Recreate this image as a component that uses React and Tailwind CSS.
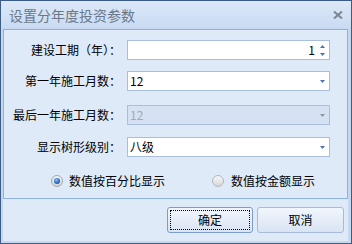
export default function App() {
  const DownArrow = ({ color = "#4a74ad" }) => (
    <svg width="5" height="3" viewBox="0 0 5 3" className="block">
      <path d="M0 0H5L2.5 3Z" fill={color} />
    </svg>
  );
  const UpArrow = ({ color = "#4a74ad" }) => (
    <svg width="5" height="3" viewBox="0 0 5 3" className="block">
      <path d="M0 3H5L2.5 0Z" fill={color} />
    </svg>
  );
  const Label = ({ children }) => (
    <div className="w-[117px] text-right text-[12px] leading-none text-black">{children}</div>
  );
  return (
    <div className="w-[352px] h-[244px] border border-[#3b5b89] flex flex-col [font-family:'Noto_Sans_CJK_SC',sans-serif] bg-[#c5d8f0]">
      <div className="h-[27px] flex items-center justify-between pl-[8px] pr-[8px] bg-gradient-to-b from-[#dce8f8] to-[#c9dbf2]">
        <span className="text-[14px] leading-none text-[#6a7889]">设置分年度投资参数</span>
        <svg width="10" height="8" viewBox="0 0 10 8" className="block">
          <path d="M1 0.5L9 7.5M9 0.5L1 7.5" stroke="#7c8692" strokeWidth="2" />
        </svg>
      </div>
      <div className="flex-1 pl-[2px] pr-[3px] pt-[1px] pb-[2px] flex">
        <div className="flex-1 bg-[#dfeaf9] flex flex-col">
          <div className="h-[170px] border border-[#8db1e0] flex flex-col">
            <div className="mt-[10px] flex items-center h-[20px]">
              <Label>建设工期（年）：</Label>
              <div className="ml-[6px] w-[203px] h-[20px] border border-[#a8bedb] bg-white flex items-center justify-end pr-[4px]">
                <span className="text-[12px] leading-none text-black">1</span>
                <div className="ml-[5px] flex flex-col gap-[5px]">
                  <UpArrow />
                  <DownArrow />
                </div>
              </div>
            </div>
            <div className="mt-[11px] flex items-center h-[20px]">
              <Label>第一年施工月数：</Label>
              <div className="ml-[6px] w-[203px] h-[20px] border border-[#a8bedb] bg-white flex items-center justify-between pl-[2px] pr-[4px]">
                <span className="text-[12px] leading-none text-black">12</span>
                <DownArrow />
              </div>
            </div>
            <div className="mt-[14px] flex items-center h-[20px]">
              <Label>最后一年施工月数：</Label>
              <div className="ml-[6px] w-[203px] h-[20px] border border-[#a8bedb] bg-[#d6e2f3] flex items-center justify-between pl-[2px] pr-[4px]">
                <span className="text-[12px] leading-none text-[#a3a9b1]">12</span>
                <DownArrow color="#8e959d" />
              </div>
            </div>
            <div className="mt-[12px] flex items-center h-[20px]">
              <Label>显示树形级别：</Label>
              <div className="ml-[6px] w-[203px] h-[20px] border border-[#a8bedb] bg-white flex items-center justify-between pl-[2px] pr-[4px]">
                <span className="text-[12px] leading-none text-black">八级</span>
                <DownArrow />
              </div>
            </div>
            <div className="mt-[17px] h-[14px] flex items-center pl-[47px]">
              <div className="w-[12px] h-[12px] rounded-full border border-[#a3a8ae] bg-gradient-to-b from-[#f4f4f4] to-[#d4d4d4] flex items-center justify-center">
                <div className="w-[6px] h-[6px] rounded-full bg-[radial-gradient(circle_at_40%_35%,#8ec3f5,#1e64c0_60%,#17468f)]" />
              </div>
              <span className="ml-[6px] text-[12px] leading-none text-black">数值按百分比显示</span>
              <div className="ml-[47px] w-[12px] h-[12px] rounded-full border border-[#b3b7bc] bg-gradient-to-b from-[#f6f6f6] to-[#d8d8d8]" />
              <span className="ml-[7px] text-[12px] leading-none text-black">数值按金额显示</span>
            </div>
          </div>
          <div className="flex justify-end pt-[8px] pr-[4px] gap-[4px]">
            <div className="w-[86px] h-[26px] rounded-[3px] border border-[#7c9dcb] bg-gradient-to-b from-[#f1f6fc] to-[#d9e4f3] p-[2px]">
              <div className="w-full h-full border border-dotted border-black flex items-center justify-center">
                <span className="text-[12px] leading-none text-black">确定</span>
              </div>
            </div>
            <div className="w-[87px] h-[26px] rounded-[3px] border border-[#a6bbd8] bg-gradient-to-b from-[#f1f6fc] to-[#d9e4f3] flex items-center justify-center">
              <span className="text-[12px] leading-none text-black">取消</span>
            </div>
          </div>
        </div>
      </div>
    </div>
  );
}
